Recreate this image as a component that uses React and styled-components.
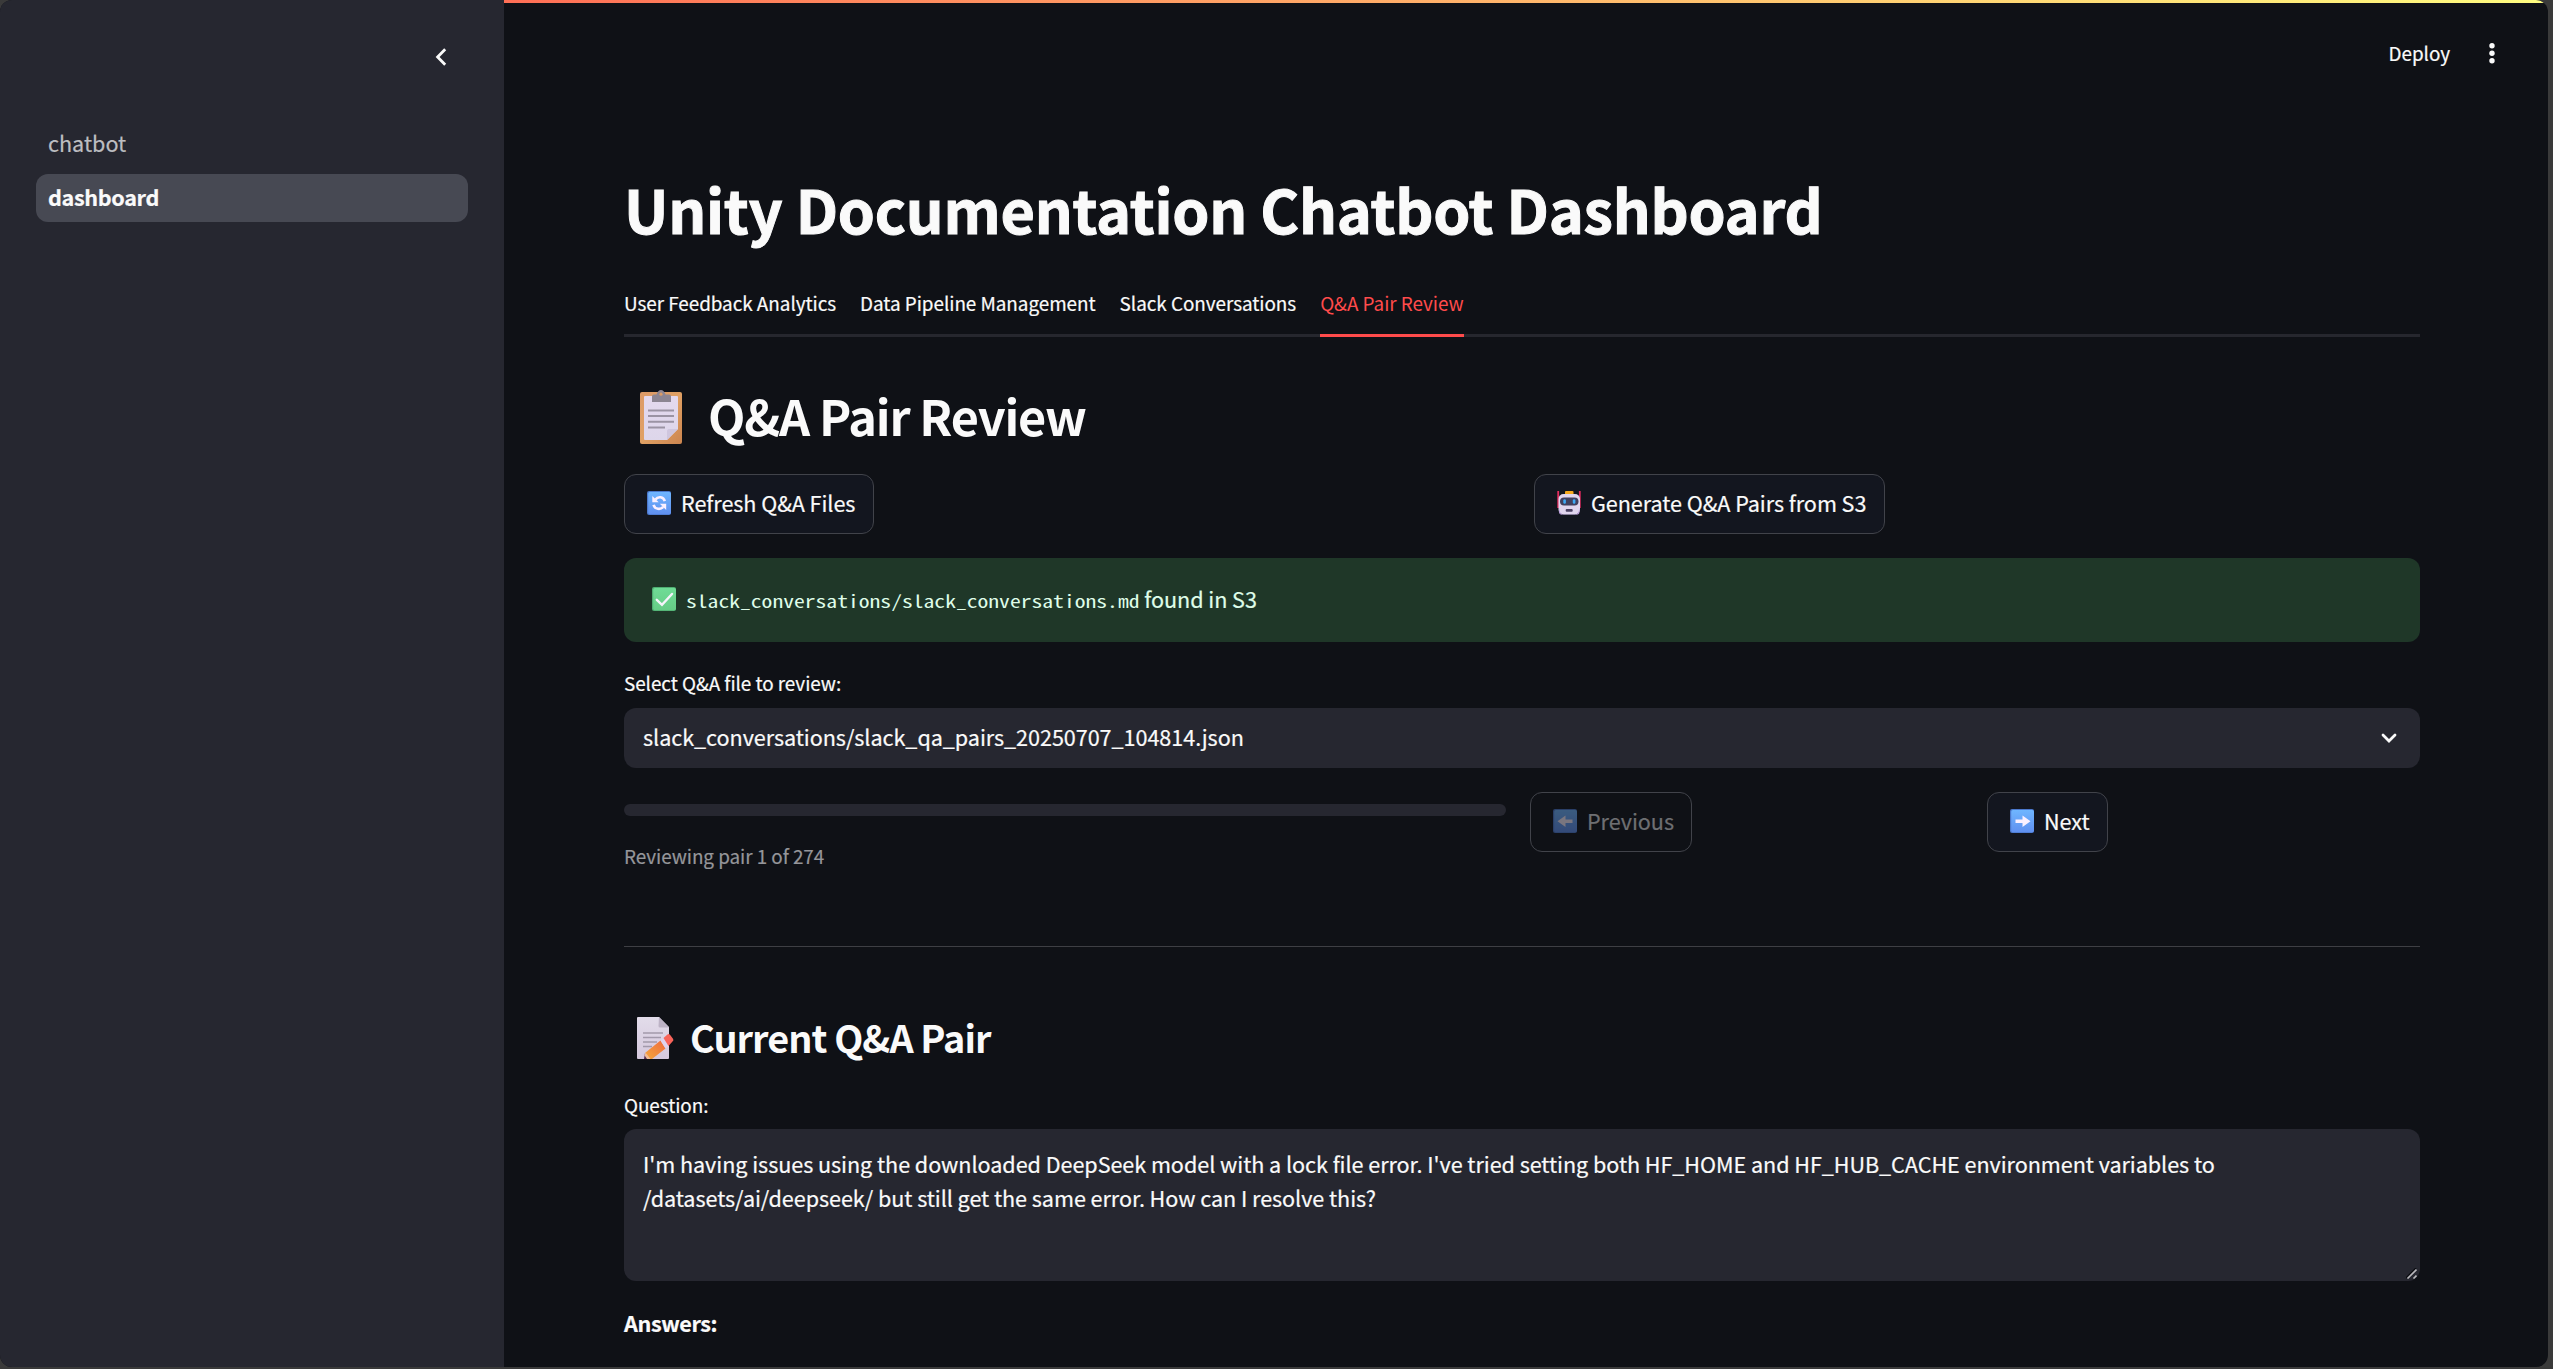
import React from "react";
import styled, { createGlobalStyle } from "styled-components";

const sans = `"Noto Sans CJK SC", "Noto Sans", sans-serif`;

const GlobalStyle = createGlobalStyle`
  * { box-sizing: border-box; }
  html, body { margin: 0; background: #3a3a3a; }
  body {
    font-family: ${sans};
    color: #fafafa;
    overflow: hidden;
    letter-spacing: -0.055px;
    -webkit-text-stroke: 0.2px currentColor;
  }
  h1, h2, h3, p { margin: 0; }
  button { font-family: inherit; letter-spacing: inherit; }
`;

const Frame = styled.div`
  display: flex;
  width: 2548px;
  height: 1367px;
  border-radius: 12px;
  overflow: hidden;
  background: #0f1116;
`;

const Sidebar = styled.aside`
  flex: 0 0 504px;
  background: #262730;
  padding: 0 36px;
`;

const SidebarHeader = styled.div`
  height: 120px;
  display: flex;
  justify-content: flex-end;
  padding: 47px 21px 0 0;
`;

const Nav = styled.nav`
  display: flex;
  flex-direction: column;
  gap: 6px;
`;

const NavItem = styled.a`
  height: 48px;
  line-height: 45px;
  padding: 0 12px;
  border-radius: 12px;
  font-size: 21.6px;
  font-weight: ${(p) => (p.$active ? 700 : 400)};
  letter-spacing: ${(p) => (p.$active ? "-0.35px" : "0")};
  color: ${(p) => (p.$active ? "#fafafa" : "#bdbec1")};
  background: ${(p) => (p.$active ? "#474953" : "transparent")};
`;

const Main = styled.main`
  flex: 1;
  display: flex;
  flex-direction: column;
`;

const Decoration = styled.div`
  height: 3px;
  background: linear-gradient(90deg, #ff6f56, #fffd80);
`;

const Header = styled.header`
  height: 100px;
  display: flex;
  justify-content: flex-end;
  align-items: center;
  gap: 39px;
  padding: 0 53px 1px 0;
  font-size: 18.9px;
`;

const Content = styled.div`
  display: flex;
  flex-direction: column;
  padding: 0 128px 0 120px;
`;

const Title = styled.h1`
  margin-top: 65px;
  font-size: 59.4px;
  line-height: 80px;
  font-weight: 700;
  letter-spacing: -0.24px;
  -webkit-text-stroke: 1px currentColor;
  white-space: nowrap;
`;

const Tabs = styled.div`
  display: flex;
  gap: 24px;
  margin-top: 29px;
  box-shadow: inset 0 -3px #26272e;
`;

const Tab = styled.div`
  padding: 8px 0 13px;
  font-size: 18.9px;
  line-height: 36px;
  letter-spacing: -0.045px;
  white-space: nowrap;
  color: ${(p) => (p.$active ? "#ff4b4b" : "#fafafa")};
  -webkit-text-stroke-width: ${(p) => (p.$active ? 0 : "0.2px")};
  border-bottom: 3px solid ${(p) => (p.$active ? "#ff4b4b" : "transparent")};
`;

const SectionTitle = styled.h2`
  display: flex;
  align-items: center;
  margin-top: 46px;
  padding-left: 16px;
  gap: 25px;
  font-size: 48.6px;
  line-height: 64px;
  font-weight: 600;
  letter-spacing: -1.15px;
  -webkit-text-stroke: 0;
  svg { margin-top: 3px; }
`;

const SubTitle = styled.h3`
  display: flex;
  align-items: center;
  margin-top: 65px;
  padding-left: 13px;
  gap: 15px;
  font-size: 37.8px;
  line-height: 50px;
  font-weight: 600;
  letter-spacing: -0.93px;
  -webkit-text-stroke: 0;
  svg { margin-top: 2px; }
`;

const Columns = styled.div`
  display: grid;
  grid-template-columns: ${(p) => p.$template};
  gap: 24px;
  margin-top: ${(p) => p.$top}px;
`;

const Button = styled.button`
  display: flex;
  align-items: center;
  justify-self: start;
  align-self: start;
  gap: 10px;
  height: 60px;
  padding: 0 17.5px 2px 22px;
  border: 1px solid #41434a;
  border-radius: 12px;
  background: ${(p) => (p.disabled ? "transparent" : "#13161f")};
  color: ${(p) => (p.disabled ? "#6e6f72" : "#fafafa")};
  font-size: 21.6px;
  line-height: 36px;
  white-space: nowrap;
  svg { opacity: ${(p) => (p.disabled ? 0.45 : 1)}; }
`;

const Alert = styled.div`
  display: flex;
  align-items: center;
  height: 84px;
  margin-top: 24px;
  padding: 0 28px 2px;
  border-radius: 12px;
  background: #1f3728;
  color: #dffde9;
  font-size: 21.6px;
  line-height: 36px;
  white-space: pre;
`;

const AlertText = styled.p`
  margin-left: 10px;
`;

const Code = styled.code`
  display: inline-block;
  font-family: "Noto Sans Mono CJK SC", "Liberation Mono", monospace;
  font-size: 21.6px;
  letter-spacing: 0;
  -webkit-text-stroke: 0;
  transform: scaleY(0.8);
  transform-origin: 0 27.5px;
`;

const Label = styled.label`
  margin-top: ${(p) => p.$top}px;
  font-size: 18.9px;
  line-height: 34px;
`;

const Select = styled.div`
  display: flex;
  align-items: center;
  justify-content: space-between;
  height: 60px;
  margin-top: 8px;
  padding: 0 23px 2px 19px;
  border-radius: 12px;
  background: #262730;
  font-size: 21.6px;
  line-height: 36px;
  svg { margin-top: 2px; }
`;

const ProgressTrack = styled.div`
  height: 12px;
  margin-top: 12px;
  border-radius: 6px;
  background: #262730;
`;

const Caption = styled.p`
  margin-top: 24px;
  font-size: 18.9px;
  line-height: 32px;
  color: #95969a;
`;

const Divider = styled.div`
  height: 1px;
  margin-top: 74px;
  background: #3e3f44;
`;

const QuestionBox = styled.div`
  position: relative;
  height: 152px;
  margin-top: 7px;
  padding: 18px 19px;
  border-radius: 12px;
  background: #262730;
  font-size: 21.6px;
  line-height: 34px;
  white-space: pre-line;
`;

const ResizeGrip = styled.svg`
  position: absolute;
  right: 3px;
  bottom: 2px;
`;

const Answers = styled.p`
  margin-top: 24px;
  font-size: 21.6px;
  line-height: 36px;
  font-weight: 700;
  letter-spacing: -0.4px;
`;

const Chevron = ({ left }) => (
  <svg
    width={left ? 12 : 16}
    height={left ? 20 : 10}
    viewBox={left ? "0 0 12 20" : "0 0 16 10"}
    fill="none"
    stroke="#fafafa"
    strokeWidth="2.8"
    strokeLinecap={left ? "butt" : "round"}
  >
    <path d={left ? "M10.2 2.200L2.600 10l7.600 7.800" : "M2 2L8 8l6-6"} />
  </svg>
);

const Dots = () => (
  <svg width="6" height="22" viewBox="0 0 6 22" fill="#fafafa">
    <circle cx="3" cy="3.8" r="2.7" />
    <circle cx="3" cy="11.3" r="2.7" />
    <circle cx="3" cy="18.8" r="2.7" />
  </svg>
);

const ClipboardIcon = () => (
  <svg width="43" height="54" viewBox="0 0 43 54">
    <defs>
      <linearGradient id="board" x1="0" y1="0" x2="1" y2="1">
        <stop offset="0" stopColor="#dc9a68" />
        <stop offset=".5" stopColor="#e0a164" />
        <stop offset="1" stopColor="#cc854f" />
      </linearGradient>
      <linearGradient id="sheet" x1="0" y1="0" x2="0" y2="1">
        <stop offset="0" stopColor="#e4d9ee" />
        <stop offset="1" stopColor="#ddd6ea" />
      </linearGradient>
    </defs>
    <rect x="0" y="2" width="42" height="52" rx="2" fill="url(#board)" />
    <path d="M5 6h32a1 1 0 0 1 1 1v32L27 50H5a1 1 0 0 1-1-1V7a1 1 0 0 1 1-1z" fill="url(#sheet)" />
    <path d="M27 50V41a2 2 0 0 1 2-2h9z" fill="#cfc6de" />
    <path d="M12 6.5a2 2 0 0 1 2-2h2.500C17.500 1.500 19 0 21 0s3.500 1.500 4.500 4.500H29a2 2 0 0 1 2 2V12H12z" fill="#8c8592" />
    <circle cx="21" cy="4.200" r="1.600" fill="#d99c68" />
    <path d="M8 20.500h26M8 26h26M8 31.800h26M8 37.500h17" stroke="#9b93a3" strokeWidth="1.900" />
  </svg>
);

const MemoIcon = () => (
  <svg width="38" height="43" viewBox="0 0 38 43">
    <defs>
      <linearGradient id="memoSheet" x1="0" y1="0" x2="0" y2="1">
        <stop offset="0" stopColor="#e2dcea" />
        <stop offset="1" stopColor="#d5c8dd" />
      </linearGradient>
      <linearGradient id="pencil" x1="0" y1="1" x2="1" y2="0">
        <stop offset="0" stopColor="#f6a83c" />
        <stop offset="1" stopColor="#ee6b3e" />
      </linearGradient>
    </defs>
    <path d="M1 0h21l10 10v31a1 1 0 0 1-1 1H1a1 1 0 0 1-1-1V1a1 1 0 0 1 1-1z" fill="url(#memoSheet)" />
    <path d="M22 0l10 10.500h-9a1.500 1.500 0 0 1-1.500-1.500z" fill="#bdb3c6" />
    <path d="M6 16h20M6 20.500h18M6 25h14M6 29.500h9" stroke="#a299ab" strokeWidth="1.700" />
    <path d="M7 42l1-6 5 6z" fill="#5b2e50" />
    <path d="M8 36l4.500 6H15l13.500-10.500-5-8z" fill="url(#pencil)" />
    <path d="M7.600 38.500L8.500 35.500l5 6.500H10z" fill="#f3bd95" />
    <path d="M23.500 23.500l3-2.500 5 8-3 2.500z" fill="#dfd3ee" />
    <path d="M26.500 21l4-3.500a2 2 0 0 1 2.500.2l3 4a2 2 0 0 1-.5 2.800L31.500 29z" fill="#f8645a" />
  </svg>
);

const Tile = ({ id, from, to, edge, children }) => (
  <svg width="24" height="24" viewBox="0 0 24 24">
    <defs>
      <linearGradient id={id} x1="0" y1="0" x2="0" y2="1">
        <stop offset="0" stopColor={from} />
        <stop offset="1" stopColor={to} />
      </linearGradient>
    </defs>
    <rect width="24" height="24" rx="2" fill={edge} />
    <rect x="1.200" y="1" width="22.800" height="22.200" rx="1.800" fill={`url(#${id})`} />
    {children}
  </svg>
);

const BlueTile = ({ id, children }) => (
  <Tile id={id} from="#6fb6ff" to="#6090f0" edge="#4b78cc">{children}</Tile>
);

const RefreshIcon = () => (
  <BlueTile id="tileRefresh">
    <path d="M8.500 8.500C11 5 16.500 5.500 17.800 10.200M16.200 15.800C13.500 19 8 18.500 6.500 13.800" fill="none" stroke="#fbf0ff" strokeWidth="2.600" />
    <path d="M5.300 5v6.300h6.400zM19.200 19v-6.300h-6.400z" fill="#fbf0ff" />
  </BlueTile>
);

const arrowRight = "M5.500 10.600h7V6.500l8 5.800-8 5.800v-4.100h-7z";

const NextIcon = () => (
  <BlueTile id="tileNext">
    <path d={arrowRight} fill="#fbf0ff" />
  </BlueTile>
);

const PreviousIcon = () => (
  <BlueTile id="tilePrevious">
    <path d={arrowRight} transform="translate(25 0) scale(-1 1)" fill="#fbf0ff" />
  </BlueTile>
);

const CheckIcon = () => (
  <Tile id="tileCheck" from="#6fdc96" to="#66cc86" edge="#4fae72">
    <path d="M4.800 12.800l5.200 5L20 7" fill="none" stroke="#f6f4fb" strokeWidth="2.400" strokeLinecap="round" />
  </Tile>
);

const RobotIcon = () => (
  <svg width="24" height="24" viewBox="0 0 24 24">
    <path d="M1.200 0v17M22.800 0v17" stroke="#e22c5e" strokeWidth="1.800" />
    <rect x="8" y="0" width="8.500" height="4" rx="1" fill="#f6a91f" />
    <rect x="1.500" y="3" width="21.500" height="20.500" rx="5" fill="#e0d5ee" />
    <path d="M2 17c1 5 2 6.500 5 6.500h10.500c3 0 4-1.500 5-6.500v4a3 3 0 0 1-3 2.800h-14.500a3 3 0 0 1-3-2.800z" fill="#bd9fdd" />
    <rect x="3" y="6.500" width="18.500" height="8" rx="4" fill="#41405f" />
    <rect x="6.300" y="8.300" width="2.600" height="4.400" rx="1.200" fill="#3fa9f5" />
    <rect x="15.800" y="8.300" width="2.600" height="4.400" rx="1.200" fill="#3fa9f5" />
    <rect x="8.700" y="18" width="7" height="2.700" rx="1" fill="#4b4163" />
  </svg>
);

const tabs = ["User Feedback Analytics", "Data Pipeline Management", "Slack Conversations", "Q&A Pair Review"];

export default function App() {
  return (
    <>
      <GlobalStyle />
      <Frame>
        <Sidebar>
          <SidebarHeader><Chevron left /></SidebarHeader>
          <Nav>
            <NavItem>chatbot</NavItem>
            <NavItem $active>dashboard</NavItem>
          </Nav>
        </Sidebar>
        <Main>
          <Decoration />
          <Header>
            <span>Deploy</span>
            <Dots />
          </Header>
          <Content>
            <Title>Unity Documentation Chatbot Dashboard</Title>
            <Tabs>
              {tabs.map((name) => (
                <Tab key={name} $active={name === "Q&A Pair Review"}>{name}</Tab>
              ))}
            </Tabs>
            <SectionTitle><ClipboardIcon />Q&amp;A Pair Review</SectionTitle>
            <Columns $template="1fr 1fr" $top={27}>
              <Button><RefreshIcon />Refresh Q&amp;A Files</Button>
              <Button><RobotIcon />Generate Q&amp;A Pairs from S3</Button>
            </Columns>
            <Alert>
              <CheckIcon />
              <AlertText><Code>slack_conversations/slack_conversations.md</Code> found in S3</AlertText>
            </Alert>
            <Label $top={24}>Select Q&amp;A file to review:</Label>
            <Select>
              slack_conversations/slack_qa_pairs_20250707_104814.json
              <Chevron />
            </Select>
            <Columns $template="882px 1fr 1fr" $top={24}>
              <div>
                <ProgressTrack />
                <Caption>Reviewing pair 1 of 274</Caption>
              </div>
              <Button disabled><PreviousIcon />Previous</Button>
              <Button><NextIcon />Next</Button>
            </Columns>
            <Divider />
            <SubTitle><MemoIcon />Current Q&amp;A Pair</SubTitle>
            <Label $top={26}>Question:</Label>
            <QuestionBox>
              {"I'm having issues using the downloaded DeepSeek model with a lock file error. I've tried setting both HF_HOME and HF_HUB_CACHE environment variables to\n/datasets/ai/deepseek/ but still get the same error. How can I resolve this?"}
              <ResizeGrip width="11" height="11" viewBox="0 0 11 11" fill="none">
                <path d="M0 10L10 0" stroke="#0b0c10" strokeWidth="1.500" />
                <path d="M1.500 10.500L10.500 1.500M7.500 10.500l3-3" stroke="#b9b9bd" strokeWidth="1.600" />
              </ResizeGrip>
            </QuestionBox>
            <Answers>Answers:</Answers>
          </Content>
        </Main>
      </Frame>
    </>
  );
}
